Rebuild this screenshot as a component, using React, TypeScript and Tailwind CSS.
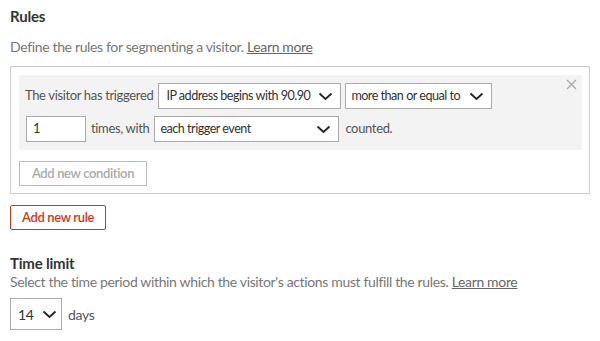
import React from 'react';

const Chevron = () => (
  <svg width="15" height="9" viewBox="0 0 15 9" className="shrink-0">
    <path d="M1.5 1.5 L7.5 7 L13.5 1.5" fill="none" stroke="#222" strokeWidth="1.8" />
  </svg>
);

const Select = ({ label, width, pad }: { label: string; width: string; pad: string }) => (
  <div className={`flex items-center justify-between h-[26px] border border-[#aaa] bg-white pr-[7px] text-[#333] ${pad} ${width}`}>
    <span className="whitespace-nowrap text-[12.6px] tracking-[-0.5px]">{label}</span>
    <Chevron />
  </div>
);

export default function App() {
  return (
    <div className="w-[600px] px-[10px] pt-[6px] font-['Lato',sans-serif] text-[14px] tracking-[-0.35px]">
      <h2 className="text-[15px] leading-[20px] font-bold text-[#333] tracking-[-0.2px]">Rules</h2>
      <p className="mt-[12px] leading-[18px] text-[#777]">
        Define the rules for segmenting a visitor.{' '}
        <a className="underline text-[#666]">Learn more</a>
      </p>

      <div className="mt-[10px] w-[580px] border border-[#ccc] pt-[8px] pl-[8px] pr-[7px] pb-[7px]">
        <div className="relative bg-[#f3f3f3] pt-[8px] pb-[8px] pl-[6px] pr-[6px] text-[13px]">
          <button className="absolute right-[5px] top-[4px] text-[#aaa]">
            <svg width="11" height="11" viewBox="0 0 11 11">
              <path d="M1 1 L10 10 M10 1 L1 10" stroke="#aaa" strokeWidth="1.3" />
            </svg>
          </button>
          <div className="flex items-center">
            <span className="text-[#555] mr-[5px]">The visitor has triggered</span>
            <Select label="IP address begins with 90.90" width="w-[183px]" pad="pl-[7px]" />
            <div className="w-[4px]" />
            <Select label="more than or equal to" width="w-[147px]" pad="pl-[5px]" />
          </div>
          <div className="flex items-center mt-[7px]">
            <div className="ml-[1px] w-[60px] h-[26px] border border-[#aaa] bg-white pl-[6px] flex items-center text-[#333]">1</div>
            <span className="text-[#555] mx-[5px]">times, with</span>
            <Select label="each trigger event" width="w-[185px]" pad="pl-[5px]" />
            <span className="text-[#555] ml-[6px]">counted.</span>
          </div>
        </div>
        <button className="mt-[11px] h-[25px] w-[128px] border border-[#bbb] bg-white text-[13px] font-semibold text-[#aaa]">
          Add new condition
        </button>
      </div>

      <button className="mt-[11px] h-[25px] w-[96px] border border-[#c8381c] rounded-[2px] bg-white text-[13px] font-semibold text-[#c8381c]">
        Add new rule
      </button>

      <h2 className="mt-[23px] text-[15px] leading-[20px] font-bold text-[#333] tracking-[-0.2px]">Time limit</h2>
      <p className="leading-[18px] text-[#777]">
        Select the time period within which the visitor's actions must fulfill the rules.{' '}
        <a className="underline text-[#666]">Learn more</a>
      </p>
      <div className="mt-[7px] flex items-center">
        <div className="flex items-center justify-between w-[52px] h-[32px] border border-[#aaa] pl-[7px] pr-[4px] text-[#333]">
          <span>14</span>
          <Chevron />
        </div>
        <span className="ml-[6px] text-[#555]">days</span>
      </div>
    </div>
  );
}
